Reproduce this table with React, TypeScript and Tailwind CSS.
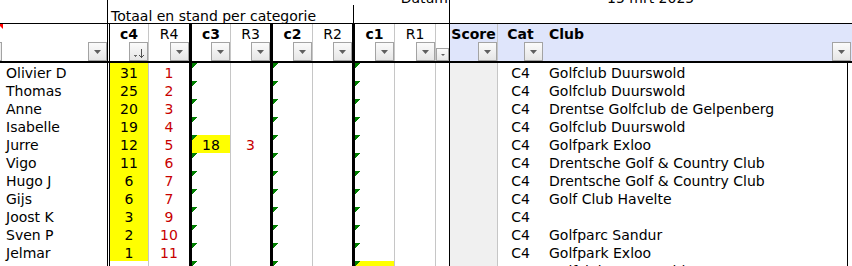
import React from "react";

type Row = {
  name: string;
  c4?: string;
  r4?: string;
  c3?: string;
  r3?: string;
  c1y?: boolean;
  cat: string;
  club: string;
};

const rows: Row[] = [
  { name: "Olivier D", c4: "31", r4: "1", cat: "C4", club: "Golfclub Duurswold" },
  { name: "Thomas", c4: "25", r4: "2", cat: "C4", club: "Golfclub Duurswold" },
  { name: "Anne", c4: "20", r4: "3", cat: "C4", club: "Drentse Golfclub de Gelpenberg" },
  { name: "Isabelle", c4: "19", r4: "4", cat: "C4", club: "Golfclub Duurswold" },
  { name: "Jurre", c4: "12", r4: "5", c3: "18", r3: "3", cat: "C4", club: "Golfpark Exloo" },
  { name: "Vigo", c4: "11", r4: "6", cat: "C4", club: "Drentsche Golf & Country Club" },
  { name: "Hugo J", c4: "6", r4: "7", cat: "C4", club: "Drentsche Golf & Country Club" },
  { name: "Gijs", c4: "6", r4: "7", cat: "C4", club: "Golf Club Havelte" },
  { name: "Joost K", c4: "3", r4: "9", cat: "C4", club: "" },
  { name: "Sven P", c4: "2", r4: "10", cat: "C4", club: "Golfparc Sandur" },
  { name: "Jelmar", c4: "1", r4: "11", cat: "C4", club: "Golfpark Exloo" },
  { name: "", c1y: true, cat: "C1", club: "Golfclub Duurswold" },
];

const W = {
  name: "w-[110px] border-r-[3px] border-double border-black",
  c4: "w-[39px] border-r border-[#c6c6c6]",
  r4: "w-[43px] border-r-[3px] border-black",
  c3: "w-[39px] border-r border-[#c6c6c6]",
  r3: "w-[42px] border-r-[3px] border-black",
  c2: "w-[40px] border-r border-[#c6c6c6]",
  r2: "w-[42px] border-r-[3px] border-black",
  c1: "w-[40px] border-r border-[#c6c6c6]",
  r1: "w-[41px] border-r border-[#c6c6c6]",
  sm: "w-[14px] border-r border-black",
  score: "w-[48px] border-r border-[#c6c6c6]",
  cat: "w-[45px]",
  club: "w-[305px] border-r border-black",
};

function Tri() {
  return (
    <svg className="absolute left-0 top-0" width="5" height="5" shapeRendering="crispEdges">
      <polygon points="0,0 5,0 0,5" fill="#008000" />
    </svg>
  );
}

function Btn() {
  return (
    <div className="flex h-[19px] w-[19px] shrink-0 items-center justify-center border border-[#a3a3a3] bg-linear-to-b from-[#fbfbfb] to-[#e6e6e6]">
      <svg width="7" height="4">
        <polygon points="0,0 7,0 3.5,4" fill="#5f5f5f" />
      </svg>
    </div>
  );
}

function SortBtn() {
  return (
    <div className="flex h-[19px] w-[19px] shrink-0 border border-[#a3a3a3] bg-linear-to-b from-[#fbfbfb] to-[#e6e6e6]">
      <svg width="17" height="17" shapeRendering="crispEdges">
        <polygon points="3,12 8,12 5.5,14" fill="#6a6a6a" />
        <line x1="11.5" y1="6" x2="11.5" y2="15" stroke="#505050" strokeWidth="1" />
        <line x1="9.5" y1="12.5" x2="11.5" y2="14.5" stroke="#505050" strokeWidth="1" />
        <line x1="13.5" y1="12.5" x2="11.5" y2="14.5" stroke="#505050" strokeWidth="1" />
      </svg>
    </div>
  );
}

function HeadCell({ cls, label, bold, align = "center" }: { cls: string; label: string; bold?: boolean; align?: "center" | "left" }) {
  return (
    <div className={`${cls} flex h-[37px] shrink-0 flex-col justify-between`}>
      <div
        className={`pt-[2px] leading-[16px] whitespace-nowrap ${bold ? "font-bold" : ""} ${
          align === "center" ? "text-center" : "pl-[6px] text-left"
        }`}
      >
        {label}
      </div>
      <div className="flex justify-end">
        <Btn />
      </div>
    </div>
  );
}

export default function App() {
  return (
    <div className="h-[266px] w-[852px] overflow-hidden bg-white font-['DejaVu_Sans',sans-serif] text-[14px] text-black">
      {/* top band */}
      <div className="flex h-[23px]">
        <div className="w-[108px] shrink-0 border-r border-black" />
        <div className="flex w-[341px] shrink-0 flex-col">
          <div className="h-[5px] overflow-hidden pr-[1px] text-right">
            <div className="-mt-[10px] leading-[16px]">Datum</div>
          </div>
          <div className="flex h-[18px]">
            <div className="w-[245px] shrink-0 whitespace-nowrap pl-[3px] pt-[3px] leading-[16px]">
              Totaal en stand per categorie
            </div>
            <div className="flex-1 border-l border-black" />
          </div>
        </div>
        <div className="flex-1 border-l border-black">
          <div className="h-[5px] overflow-hidden pl-[157px]">
            <div className="-mt-[10px] whitespace-nowrap leading-[16px]">15 mrt 2025</div>
          </div>
        </div>
      </div>
      <div className="h-px bg-black" />

      {/* header row */}
      <div className="flex h-[37px]">
        <div className={`${W.name} relative flex h-[37px] shrink-0 items-end justify-between`}>
          <svg className="absolute left-0 top-0" width="3" height="5">
            <polygon points="0,0 3,0 3,5 0,2" fill="#ff0000" />
          </svg>
          <div className="h-[19px] w-[2px] border-y border-r border-[#a3a3a3] bg-[#eeeeee]" />
          <Btn />
        </div>
        <div className={`${W.c4} flex h-[37px] shrink-0 flex-col justify-between`}>
          <div className="pt-[2px] text-center font-bold leading-[16px]">c4</div>
          <div className="flex justify-end">
            <SortBtn />
          </div>
        </div>
        <HeadCell cls={W.r4} label="R4" />
        <HeadCell cls={W.c3} label="c3" bold />
        <HeadCell cls={W.r3} label="R3" />
        <HeadCell cls={W.c2} label="c2" bold />
        <HeadCell cls={W.r2} label="R2" />
        <HeadCell cls={W.c1} label="c1" bold />
        <HeadCell cls={W.r1} label="R1" />
        <div className={`${W.sm} flex h-[37px] shrink-0 items-end`}>
          <div className="flex h-[13px] w-[13px] items-center justify-center border border-[#a3a3a3] bg-linear-to-b from-[#fbfbfb] to-[#e6e6e6]">
            <svg width="4" height="2">
              <polygon points="0,0 4,0 2,2" fill="#5f5f5f" />
            </svg>
          </div>
        </div>
        <div className="flex flex-1 bg-[#dfe5fb]">
          <HeadCell cls={W.score} label="Score" bold />
          <HeadCell cls={W.cat} label="Cat" bold />
          <div className="flex h-[37px] flex-1 flex-col justify-between">
            <div className="pl-[6px] pt-[2px] font-bold leading-[16px]">Club</div>
            <div className="flex justify-end pr-px">
              <Btn />
            </div>
          </div>
        </div>
      </div>
      <div className="h-[2px] bg-black" />

      {/* body rows */}
      <div className="flex flex-col">
        {rows.map((r, i) => (
          <div key={i} className="flex h-[18px] whitespace-nowrap leading-[16px]">
            <div className={`${W.name} shrink-0 pl-[6px] pt-[2px]`}>{r.name}</div>
            <div className={`${W.c4} shrink-0 pt-[2px] text-center ${r.c4 ? "bg-[#ffff00]" : ""}`}>{r.c4}</div>
            <div className={`${W.r4} shrink-0 pt-[2px] text-center text-[#c80000]`}>{r.r4}</div>
            <div className={`${W.c3} relative shrink-0 pt-[2px] text-center ${r.c3 ? "bg-[#ffff00]" : ""}`}>
              <Tri />
              {r.c3}
            </div>
            <div className={`${W.r3} shrink-0 pt-[2px] text-center text-[#c80000]`}>{r.r3}</div>
            <div className={`${W.c2} relative shrink-0`}>
              <Tri />
            </div>
            <div className={`${W.r2} shrink-0`} />
            <div className={`${W.c1} relative shrink-0 ${r.c1y ? "bg-[#ffff00]" : ""}`}>
              <Tri />
            </div>
            <div className={`${W.r1} shrink-0`} />
            <div className={`${W.sm} shrink-0`} />
            <div className={`${W.score} shrink-0 bg-[#f0f0f0]`} />
            <div className={`${W.cat} shrink-0 pt-[2px] text-center`}>{r.cat}</div>
            <div className={`${W.club} shrink-0 pl-[6px] pt-[2px]`}>{r.club}</div>
          </div>
        ))}
      </div>
    </div>
  );
}
